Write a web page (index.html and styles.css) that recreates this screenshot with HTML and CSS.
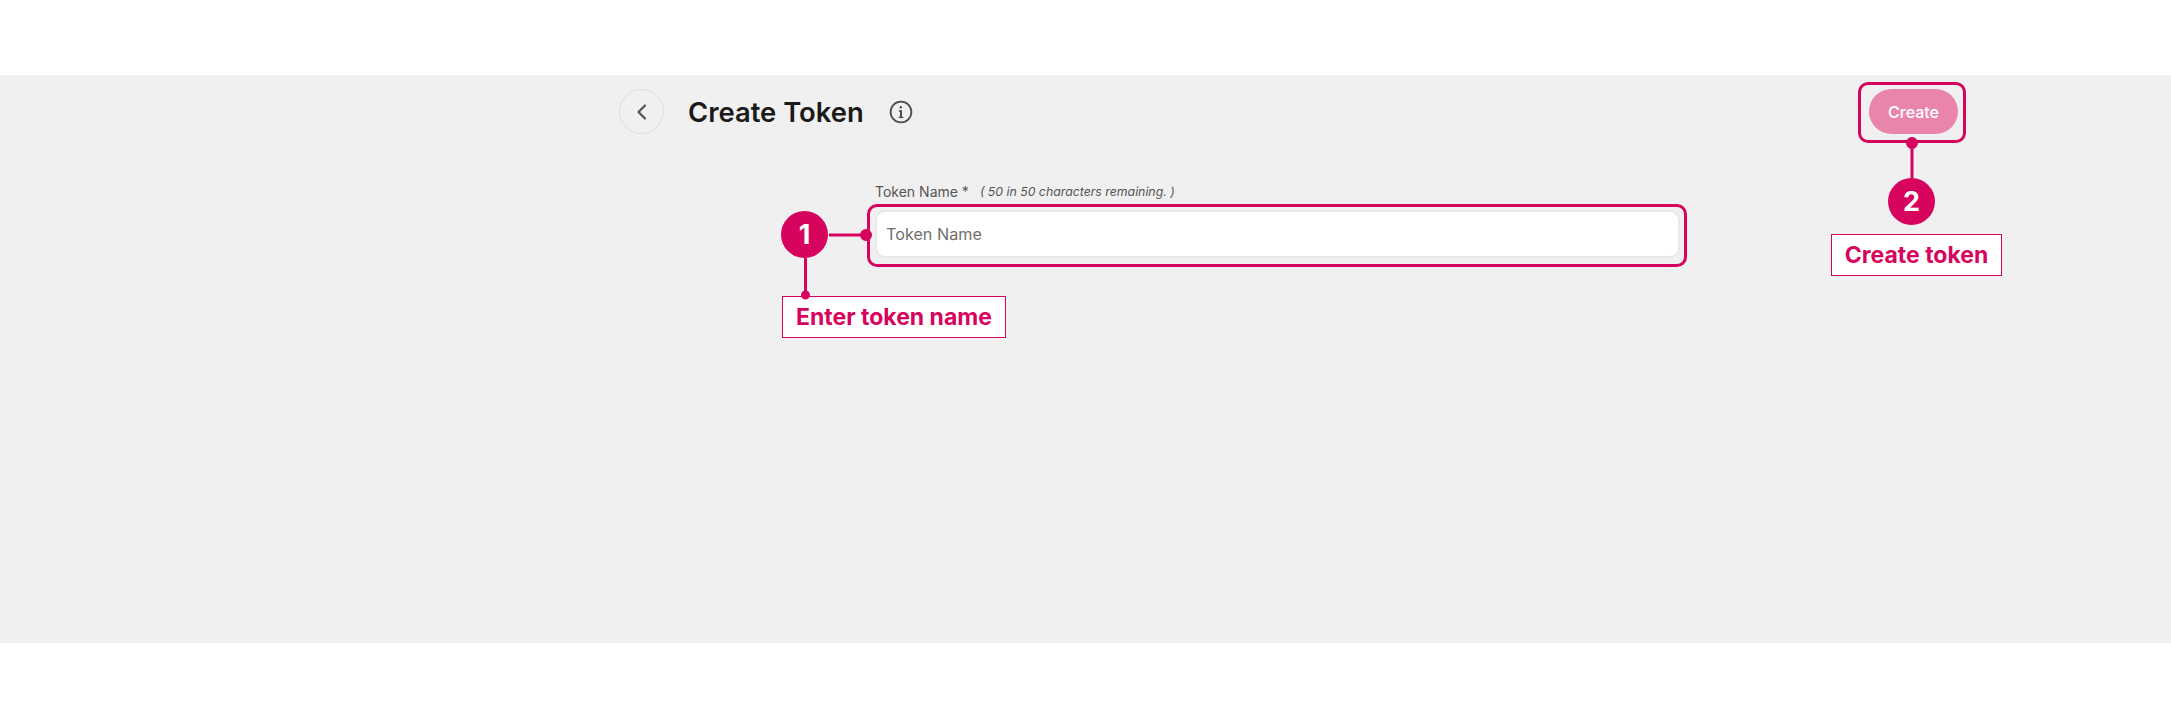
FILE: index.html
```html
<!DOCTYPE html>
<html lang="en">
<head>
    <meta charset="UTF-8">
    <meta name="viewport" content="width=device-width, initial-scale=1.0">
    <title>Create Token</title>
    <link rel="stylesheet" href="styles.css">
</head>
<body>

    <main class="band">
        <div class="page">
            <header class="page-header">
                <button class="back-button" type="button" aria-label="Back">
                    <svg width="14" height="18" viewBox="0 0 14 18" fill="none" stroke="#555" stroke-width="2.2" stroke-linecap="round" stroke-linejoin="round">
                        <path d="M10 2.5 L3.5 9 L10 15.5"/>
                    </svg>
                </button>
                <h1 class="page-title">Create Token</h1>
                <svg class="info-icon" width="24" height="24" viewBox="0 0 24 24" fill="none" stroke="#4d4d4d" stroke-width="1.8" stroke-linecap="round">
                    <circle cx="12" cy="12" r="10.4"/>
                    <path d="M12 11 V17.2" stroke-width="2"/>
                    <path d="M10.4 11 H12" stroke-width="1.4"/>
                    <path d="M10.2 17.4 H13.8" stroke-width="1.4"/>
                    <circle cx="11.8" cy="7.2" r="1.2" fill="#4d4d4d" stroke="none"/>
                </svg>
                <button class="create-button" type="button">Create</button>
            </header>

            <form class="token-form">
                <div class="field-label">
                    <label for="tokenName">Token Name *</label>
                    <span class="field-hint">( 50 in 50 characters remaining. )</span>
                </div>
                <input id="tokenName" class="text-input" type="text" placeholder="Token Name">
            </form>
        </div>
    </main>

    <!-- callouts on top of the screenshot -->
    <div class="callouts">
        <div class="frame frame-input"></div>
        <div class="frame frame-button"></div>
        <div class="badge badge-one">1</div>
        <div class="badge badge-two">2</div>
        <div class="note note-one">Enter token name</div>
        <div class="note note-two">Create token</div>
        <svg class="connectors" width="2171" height="724" fill="#d7045d" stroke="#d7045d" stroke-width="3">
            <path d="M829 235 H866" fill="none"/>
            <path d="M805.5 258 V295" fill="none"/>
            <path d="M1912 143 V178" fill="none"/>
            <circle cx="866" cy="235" r="4.5"/>
            <circle cx="805.5" cy="295" r="3"/>
            <circle cx="1912" cy="143" r="4.5"/>
        </svg>
    </div>

</body>
</html>
```

FILE: styles.css
```css
body {
    margin: 0;
    height: 724px;
    background-color: #fff;
    font-family: Inter, "Liberation Sans", sans-serif;
    overflow: hidden;
    position: relative;
}

.band {
    margin-top: 75px;
    height: 568px;
    padding-top: 14px;
    box-sizing: border-box;
    background-color: #f0f0f0;
    float: left;
    width: 100%;
}

.page {
    width: 1339px;
    margin-left: 619px;
}

.page-header {
    display: flex;
    align-items: center;
    height: 45px;
}

.back-button {
    width: 45px;
    height: 45px;
    padding: 0;
    display: flex;
    align-items: center;
    justify-content: center;
    background: transparent;
    border: 1px solid #dedede;
    border-radius: 50%;
}

.page-title {
    margin: 0 0 0 24px;
    font-size: 27.4px;
    font-weight: 600;
    color: #1a1a1a;
}

.info-icon {
    margin-left: 25px;
}

.create-button {
    margin-left: auto;
    width: 89px;
    height: 45px;
    padding: 0;
    background-color: #e985ad;
    border: 0;
    border-radius: 23px;
    color: #fff;
    font-family: inherit;
    font-size: 16px;
    font-weight: 500;
}

.token-form {
    width: 805px;
    margin-left: 256px;
    margin-top: 45px;
}

.field-label {
    display: flex;
    align-items: center;
    height: 24px;
    margin-bottom: 7px;
    font-size: 14px;
    color: #555;
    white-space: nowrap;
}

.field-hint {
    margin-left: 11px;
    font-size: 12.3px;
    font-style: italic;
}

.text-input {
    display: block;
    width: 100%;
    height: 48px;
    padding: 0 9px;
    box-sizing: border-box;
    background-color: #fff;
    border: 2px solid #e8e8e8;
    border-radius: 10px;
    font-family: inherit;
    font-size: 16.2px;
}

.text-input::placeholder {
    color: #6f6f6f;
    opacity: 1;
}

.callouts {
    position: absolute;
    top: 0;
    left: 0;
    width: 2171px;
    height: 724px;
    pointer-events: none;
}

.connectors {
    position: absolute;
    top: 0;
    left: 0;
}

.frame {
    position: absolute;
    box-sizing: border-box;
    border: 3px solid #d7045d;
    border-radius: 10px;
}

.frame-input {
    left: 867px;
    top: 204px;
    width: 820px;
    height: 63px;
}

.frame-button {
    left: 1858px;
    top: 82px;
    width: 108px;
    height: 61px;
}

.badge {
    position: absolute;
    width: 47px;
    height: 47px;
    display: flex;
    align-items: center;
    justify-content: center;
    background-color: #d7045d;
    border-radius: 50%;
    color: #fff;
    font-size: 27px;
    font-weight: 700;
}

.badge-one {
    left: 781px;
    top: 211px;
}

.badge-two {
    left: 1888px;
    top: 178px;
}

.note {
    position: absolute;
    box-sizing: border-box;
    display: flex;
    align-items: center;
    justify-content: center;
    background-color: #fff;
    border: 1.5px solid #d7045d;
    color: #d7045d;
    font-size: 23px;
    font-weight: 700;
    white-space: nowrap;
}

.note-one {
    left: 782px;
    top: 296px;
    width: 224px;
    height: 42px;
}

.note-two {
    left: 1831px;
    top: 234px;
    width: 171px;
    height: 42px;
}
```
